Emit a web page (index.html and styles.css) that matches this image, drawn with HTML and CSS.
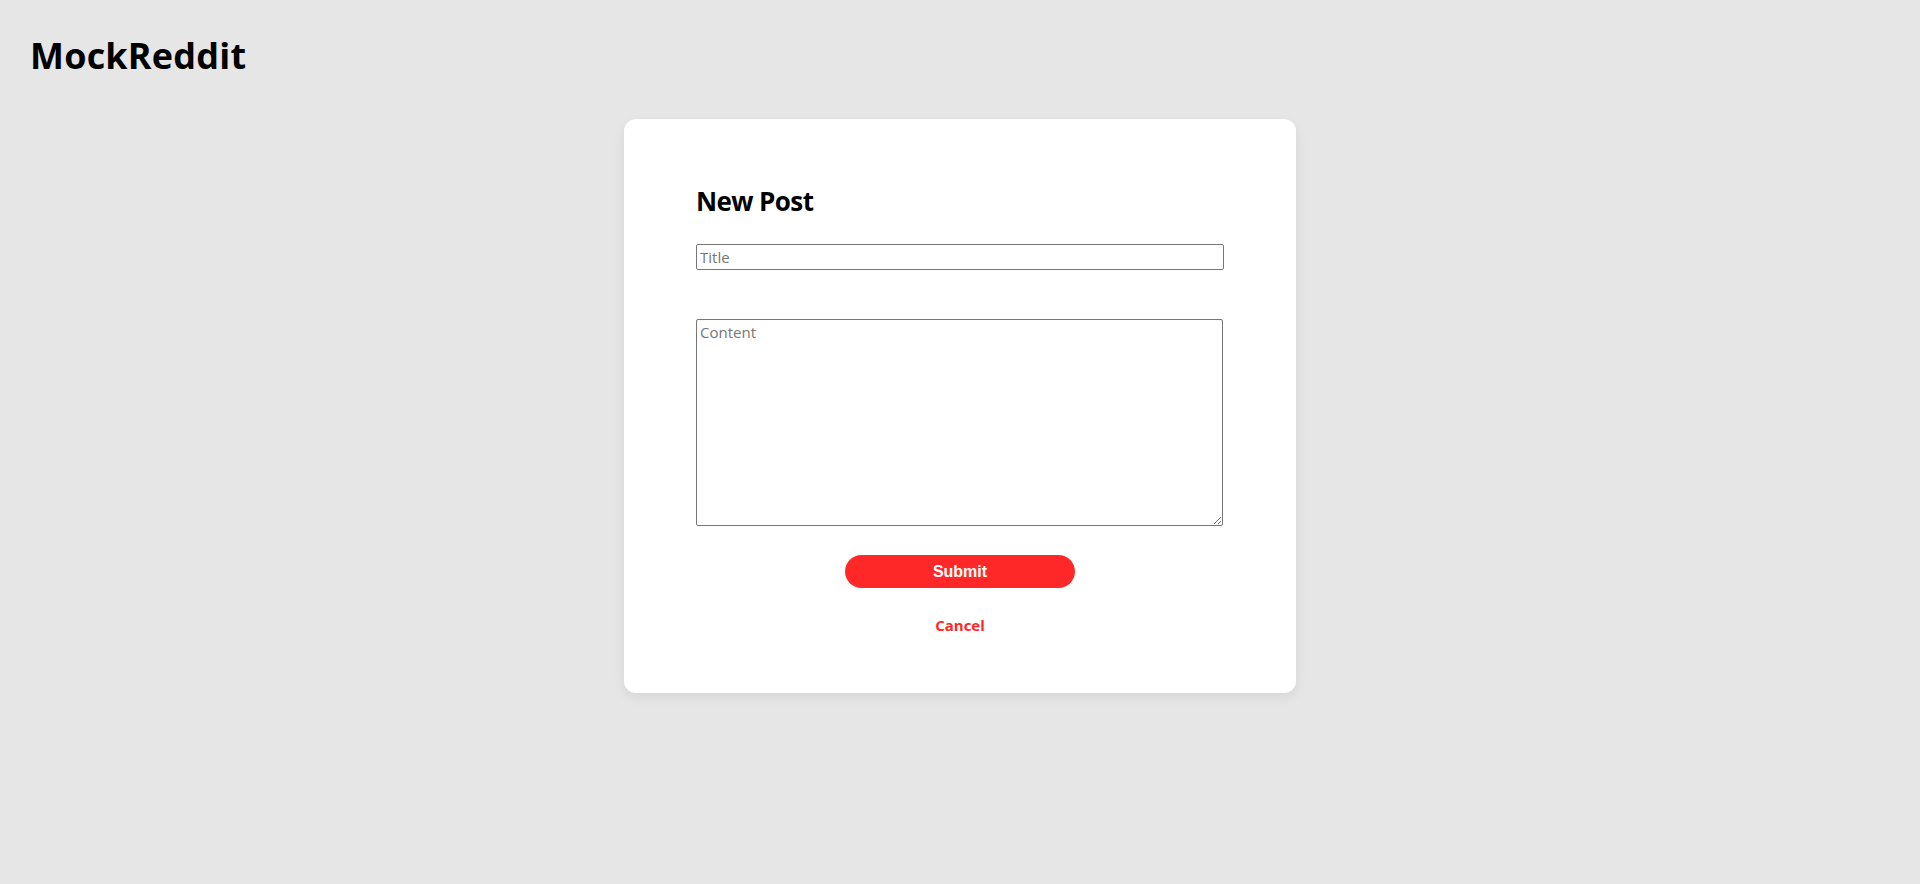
FILE: index.html
```html
<!DOCTYPE html>
<html lang="en">
<head>
<meta charset="utf-8">
<title>MockReddit - New Post</title>
<link rel="stylesheet" href="styles.css">
</head>
<body>
  <header class="site-header">
    <h1 class="brand">MockReddit</h1>
  </header>
  <main class="page">
    <form class="post-card">
      <h2 class="post-title">New Post</h2>
      <input class="field-title" type="text" placeholder="Title">
      <textarea class="field-content" placeholder="Content"></textarea>
      <div class="actions">
        <button class="btn-submit" type="button">Submit</button>
        <a class="btn-cancel" href="#">Cancel</a>
      </div>
    </form>
  </main>
</body>
</html>
```

FILE: styles.css
```css
* {
  box-sizing: border-box;
}

html, body {
  margin: 0;
  padding: 0;
}

body {
  background: #e6e6e6;
  font-family: "Open Sans", "Noto Sans", sans-serif;
  color: #000;
  min-height: 884px;
}

.site-header {
  padding: 31px 0 0 30px;
}

.brand {
  margin: 0;
  font-size: 36px;
  line-height: 49px;
  font-weight: 700;
  letter-spacing: 0.2px;
}

.page {
  display: flex;
  justify-content: center;
  padding-top: 39px;
}

.post-card {
  width: 672px;
  background: #fff;
  border-radius: 12px;
  box-shadow: 0 4px 12px rgba(0, 0, 0, 0.07);
  padding: 65px 72px 58px 72px;
  display: flex;
  flex-direction: column;
}

.post-title {
  margin: 0;
  font-size: 26px;
  line-height: 35px;
  font-weight: 700;
  letter-spacing: -0.6px;
}

.field-title {
  margin-top: 25px;
  width: 528px;
  height: 26px;
  border: 1px solid #767676;
  border-radius: 2px;
  padding: 0 3px;
  font-family: "Open Sans", "Noto Sans", sans-serif;
  font-size: 15px;
  color: #000;
  background: #fff;
  outline: none;
}

.field-content {
  margin-top: 49px;
  width: 527px;
  height: 207px;
  border: 1px solid #767676;
  border-radius: 2px;
  padding: 2px 3px;
  font-family: "Open Sans", "Noto Sans", sans-serif;
  font-size: 15px;
  line-height: 20px;
  color: #000;
  background: #fff;
  outline: none;
  resize: both;
}

.field-title::placeholder,
.field-content::placeholder {
  color: #767676;
}

.actions {
  display: flex;
  flex-direction: column;
  align-items: center;
}

.btn-submit {
  margin-top: 29px;
  width: 230px;
  height: 33px;
  border: none;
  border-radius: 17px;
  background: #ff2828;
  color: #fff;
  font-family: "Liberation Sans", Arial, sans-serif;
  font-weight: 700;
  font-size: 16px;
  padding: 0;
  cursor: pointer;
}

.btn-cancel {
  margin-top: 27px;
  font-size: 15px;
  line-height: 20px;
  font-weight: 700;
  color: #ff2828;
  text-decoration: none;
}
```
